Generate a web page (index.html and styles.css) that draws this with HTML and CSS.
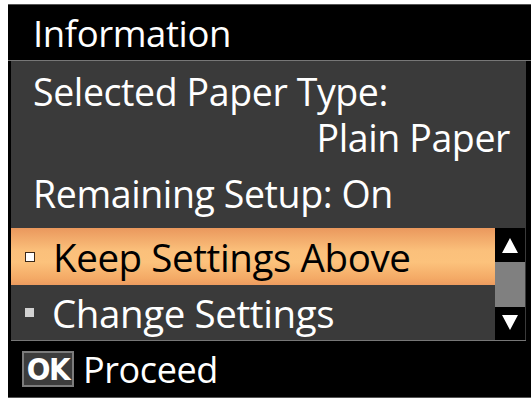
FILE: index.html
```html
<!DOCTYPE html>
<html lang="en">
<head>
    <meta charset="UTF-8">
    <title>Information</title>
    <link rel="stylesheet" href="styles.css">
</head>
<body>
    <div class="screen">
        <div class="title">Information</div>
        <div class="panel">
            <div class="info first">Selected Paper Type:</div>
            <div class="info right">Plain Paper</div>
            <div class="info setup">Remaining Setup: On</div>
            <div class="menu">
                <ul class="options">
                    <li class="option selected"><span class="bullet"></span>Keep Settings Above</li>
                    <li class="option"><span class="bullet"></span>Change Settings</li>
                </ul>
                <div class="scrollbar">
                    <span class="arrow up"></span>
                    <span class="thumb"></span>
                    <span class="arrow down"></span>
                </div>
            </div>
        </div>
        <div class="footer">
            <span class="ok">OK</span>
            <span class="proceed">Proceed</span>
        </div>
    </div>
</body>
</html>
```

FILE: styles.css
```css
body {
    margin: 0;
    padding: 4px 0 0 8px;
    background: #fff;
    font-family: "Open Sans", "Noto Sans", sans-serif;
    color: #fff;
}
.screen {
    width: 523px;
    height: 394px;
    background: #000;
    display: flex;
    flex-direction: column;
    box-sizing: border-box;
    border-top: 1px solid #555;
    border-bottom: 1px solid #555;
}
.title {
    padding-top: 1px;
    padding-left: 25px;
    font-size: 36.5px;
    line-height: 54px;
    letter-spacing: -0.4px;
    border-bottom: 1px solid #777;
    box-sizing: border-box;
    height: 56px;
}
.panel {
    margin: 0 5px 0 3px;
    background: #3a3a3a;
    height: 279px;
    display: flex;
    flex-direction: column;
    border-bottom: 1px solid #777;
}
.info {
    font-size: 37.5px;
    line-height: 46px;
    letter-spacing: -0.4px;
    padding-left: 22px;
}
.info.first {
    margin-top: 8px;
}
.info.right {
    text-align: right;
    padding-right: 16px;
}
.info.setup {
    margin-top: 10px;
}
.menu {
    margin-top: 11px;
    display: flex;
    flex: 1;
}
.options {
    list-style: none;
    margin: 0;
    padding: 0;
    flex: 1;
}
.option {
    display: flex;
    align-items: center;
    height: 55px;
    padding-left: 14px;
    font-size: 38.5px;
    letter-spacing: -0.4px;
}
.option .bullet {
    width: 9px;
    height: 9px;
    background: #d2d2d2;
    margin-right: 18px;
}
.option.selected {
    height: 57px;
    color: #000;
    background: linear-gradient(to bottom, #ea985d 0%, #fbc07b 40%, #fcc27c 60%, #f4aa66 88%, #ec9b5f 100%);
}
.option.selected .bullet {
    width: 8px;
    height: 8px;
    background: #fff;
    border: 1.5px solid #3a2818;
}
.scrollbar {
    width: 30px;
    margin-right: 1px;
    background: #000;
    display: flex;
    flex-direction: column;
    align-items: center;
}
.arrow {
    width: 0;
    height: 0;
    border-left: 8.5px solid transparent;
    border-right: 8.5px solid transparent;
}
.arrow.up {
    margin-top: 10px;
    border-bottom: 15px solid #fff;
}
.thumb {
    align-self: stretch;
    height: 45px;
    margin-top: 9px;
    background: #808080;
}
.arrow.down {
    margin-top: 8px;
    border-top: 15px solid #fff;
}
.footer {
    flex: 1;
    display: flex;
    align-items: center;
    padding-left: 14px;
}
.ok {
    width: 48px;
    height: 32px;
    border: 2px solid #7c7c7c;
    background: #3c3c3c;
    font-family: "DejaVu Sans Condensed", "DejaVu Sans", sans-serif;
    font-stretch: condensed;
    font-weight: bold;
    font-size: 31px;
    line-height: 32px;
    letter-spacing: -1.5px;
    text-align: center;
    margin-right: 9px;
}
.proceed {
    font-size: 36px;
    letter-spacing: -0.4px;
}
```
